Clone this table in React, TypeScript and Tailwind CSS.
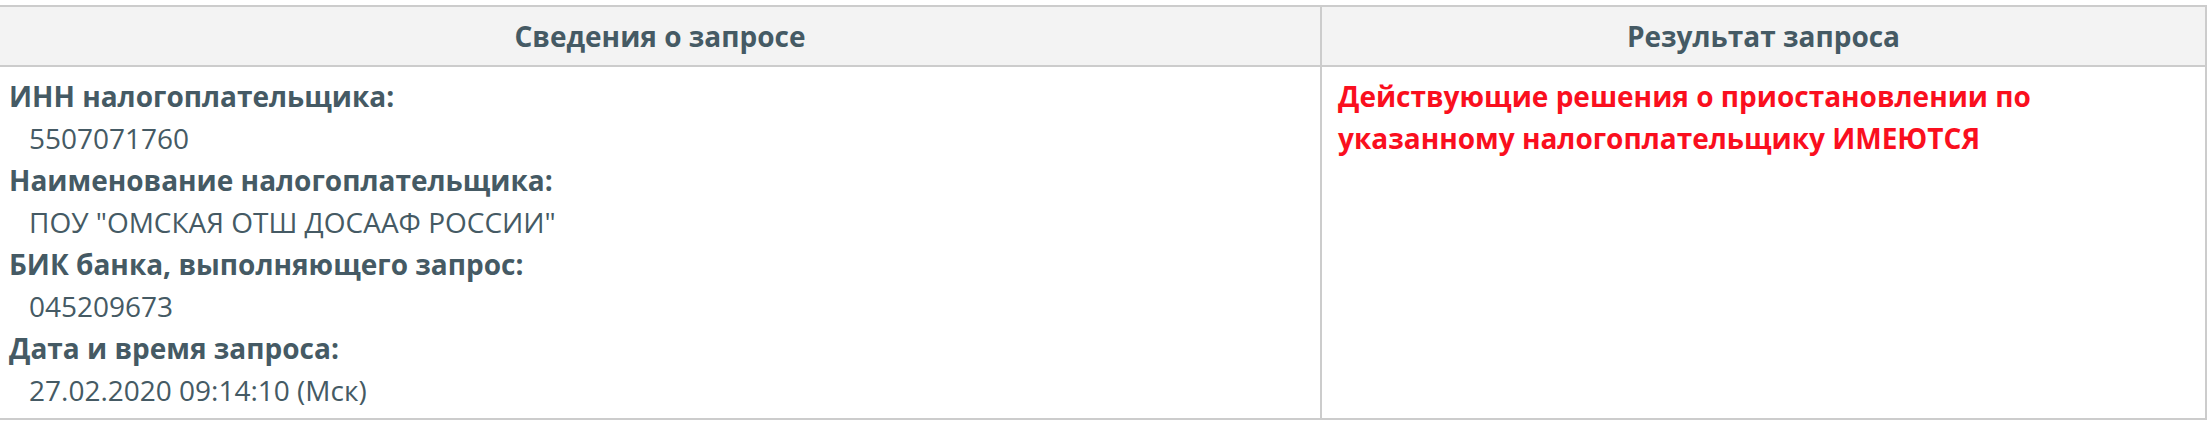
import React from 'react';

const rows = [
  { label: 'ИНН налогоплательщика:', value: '5507071760' },
  { label: 'Наименование налогоплательщика:', value: 'ПОУ "ОМСКАЯ ОТШ ДОСААФ РОССИИ"' },
  { label: 'БИК банка, выполняющего запрос:', value: '045209673' },
  { label: 'Дата и время запроса:', value: '27.02.2020 09:14:10 (Мск)' },
];

export default function App() {
  return (
    <div className="w-[2208px] h-[424px] bg-white pt-[5px] pr-[1px] font-['Open_Sans',sans-serif] text-[#455a64]">
      <div className="grid grid-cols-[1320px_1fr] border-t-2 border-b-2 border-r-2 border-[#cccccc]">
        {/* header */}
        <div className="h-[60px] bg-[#f3f3f3] border-b-2 border-[#cccccc] flex items-center justify-center text-[28px] font-bold">
          Сведения о запросе
        </div>
        <div className="h-[60px] bg-[#f3f3f3] border-b-2 border-l-2 border-[#cccccc] flex items-center justify-center text-[28px] font-bold">
          Результат запроса
        </div>

        {/* body */}
        <div className="h-[351px] pt-[8px] pl-[9px] text-[28px] leading-[42px]">
          {rows.map((r) => (
            <div key={r.label}>
              <div className="font-bold">{r.label}</div>
              <div className="pl-[20px]">{r.value}</div>
            </div>
          ))}
        </div>
        <div className="h-[351px] border-l-2 border-[#cccccc] pt-[8px] pl-[16px] text-[28px] leading-[42px] font-bold text-[#fa0f1e]">
          Действующие решения о приостановлении по
          <br />
          указанному налогоплательщику ИМЕЮТСЯ
        </div>
      </div>
    </div>
  );
}
